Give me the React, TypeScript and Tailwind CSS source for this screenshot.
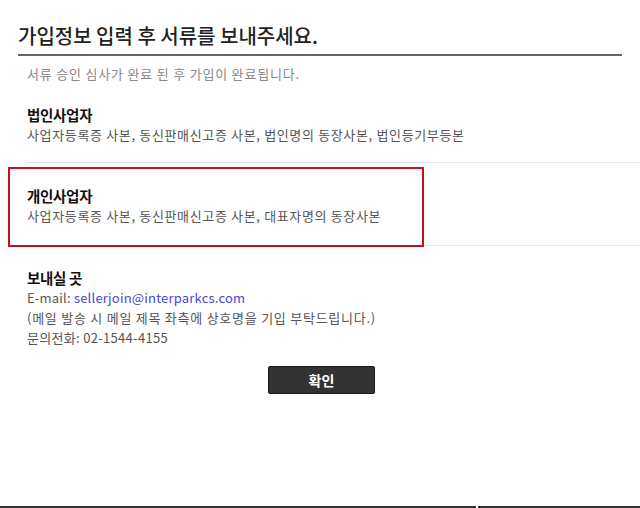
const FONT = "font-['Noto_Sans_CJK_KR','Noto_Sans',sans-serif]";

function DocSection({ title, body }: { title: string; body: string }) {
  return (
    <div className="ml-[27px] border-b border-[#e3e6ea]">
      <h3 className="text-[14.5px] leading-[20px] font-bold text-[#111] tracking-[-0.3px]">
        {title}
      </h3>
      <p className="text-[13px] leading-[20px] text-[#555] tracking-[0.65px]">
        {body}
      </p>
    </div>
  );
}

export default function App() {
  return (
    <div className={`${FONT} relative flex h-[508px] w-[640px] flex-col bg-white`}>
      {/* Header */}
      <div className="mx-[18px] mt-[24px] border-b-2 border-[#666] pb-[6px]">
        <h1 className="text-[20px] leading-[24px] font-medium text-[#222]">
          가입정보 입력 후 서류를 보내주세요.
        </h1>
      </div>
      <p className="ml-[27px] mt-[8px] text-[13px] leading-[20px] text-[#888] tracking-[0.8px]">
        서류 승인 심사가 완료 된 후 가입이 완료됩니다.
      </p>

      {/* Document sections */}
      <div className="mt-[21px] [&>div:first-child]:pb-[17px] [&>div:nth-child(2)]:pt-[23px] [&>div:nth-child(2)]:pb-[19px]">
        <DocSection
          title="법인사업자"
          body="사업자등록증 사본, 동신판매신고증 사본, 법인명의 동장사본, 법인등기부등본"
        />
        <DocSection
          title="개인사업자"
          body="사업자등록증 사본, 동신판매신고증 사본, 대표자명의 동장사본"
        />
      </div>

      {/* Highlight */}
      <div className="absolute left-[8px] top-[167px] h-[80px] w-[416px] border-2 border-[#c8101a]" />

      {/* Send to */}
      <div className="ml-[27px] mt-[22px] text-[13px] leading-[20px] text-[#555]">
        <h3 className="text-[14.5px] leading-[20px] font-bold text-[#111] tracking-[-0.3px]">
          보내실 곳
        </h3>
        <p className="tracking-[0.2px]">
          E-mail: <span className="text-[#4747d6]">sellerjoin@interparkcs.com</span>
        </p>
        <p className="tracking-[0.75px]">(메일 발송 시 메일 제목 좌측에 상호명을 기입 부탁드립니다.)</p>
        <p className="tracking-[0.3px]">문의전화: 02-1544-4155</p>
      </div>

      <div className="mt-[18px] flex justify-center">
        <button className="ml-[3px] h-[28px] w-[107px] rounded-[2px] border border-[#1a1a1a] bg-[#333] text-[14px] font-bold text-white">
          확인
        </button>
      </div>

      {/* Bottom edge */}
      <div className="mt-auto flex h-[2px] gap-[2px]">
        <div className="w-[476px] bg-[#333]" />
        <div className="flex-1 bg-[#333]" />
      </div>
    </div>
  );
}
